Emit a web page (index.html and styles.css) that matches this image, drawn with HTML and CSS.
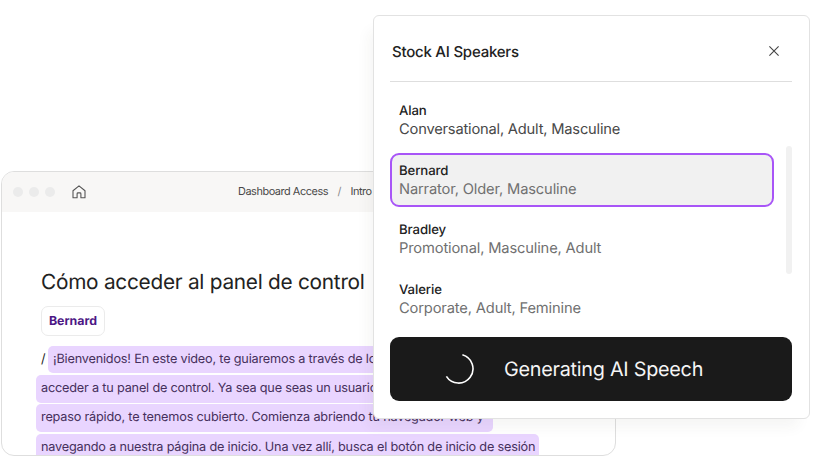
FILE: index.html
```html
<!DOCTYPE html>
<html lang="en">
<head>
  <meta charset="UTF-8">
  <meta name="viewport" content="width=device-width, initial-scale=1.0">
  <title>Stock AI Speakers</title>
  <link rel="stylesheet" href="styles.css">
</head>
<body>

  <!-- Script editor window -->
  <div class="editor">
    <div class="editor-bar">
      <span class="dot"></span>
      <span class="dot"></span>
      <span class="dot"></span>
      <svg class="home-icon" width="14" height="14" viewBox="0 0 14 14" fill="none" stroke="#555" stroke-width="1.1" stroke-linejoin="round">
        <path d="M1 5.8 L7 0.9 L13 5.8 V12.7 H8.9 V8.8 Q8.9 7.9 8 7.9 H6 Q5.1 7.9 5.1 8.8 V12.7 H1 Z" />
      </svg>
      <div class="breadcrumb">
        <span>Dashboard Access</span>
        <span class="separator">/</span>
        <span>Intro</span>
      </div>
    </div>

    <div class="editor-body">
      <h1>Cómo acceder al panel de control</h1>
      <div class="speaker-tag">Bernard</div>
      <div class="script" lang="es">
        <div class="line"><span class="slash">/</span><span class="mark">¡Bienvenidos! En este video, te guiaremos a través de los pasos para</span></div>
        <div class="line"><span class="mark">acceder a tu panel de control. Ya sea que seas un usuario nuevo o</span></div>
        <div class="line"><span class="mark wide">repaso rápido, te tenemos cubierto. Comienza abriendo tu navegador web y</span></div>
        <div class="line"><span class="mark">navegando a nuestra página de inicio. Una vez allí, busca el botón de inicio de sesión</span></div>
      </div>
    </div>
  </div>

  <!-- Speaker picker -->
  <div class="modal">
    <div class="modal-header">
      <h2>Stock AI Speakers</h2>
      <svg class="close-icon" width="10" height="10" viewBox="0 0 10 10" fill="none" stroke="#444" stroke-width="1.1">
        <path d="M0.4 0.4 L9.6 9.6 M9.6 0.4 L0.4 9.6" />
      </svg>
    </div>

    <div class="speakers">
      <div class="speaker-list">
        <div class="speaker alan">
          <div class="name">Alan</div>
          <div class="traits">Conversational, Adult, Masculine</div>
        </div>
        <div class="speaker selected">
          <div class="name">Bernard</div>
          <div class="traits">Narrator, Older, Masculine</div>
        </div>
        <div class="speaker">
          <div class="name">Bradley</div>
          <div class="traits">Promotional, Masculine, Adult</div>
        </div>
        <div class="speaker">
          <div class="name">Valerie</div>
          <div class="traits">Corporate, Adult, Feminine</div>
        </div>
      </div>
      <div class="scrollbar"></div>
    </div>

    <div class="generate">
      <svg class="spinner" width="32" height="32" viewBox="0 0 32 32" fill="none" stroke="#fff" stroke-width="1.6">
        <path d="M19.4 1.8 A14.4 14.4 0 1 1 3.4 23.4" />
      </svg>
      <span>Generating AI Speech</span>
    </div>
  </div>

</body>
</html>
```

FILE: styles.css
```css
* {
  box-sizing: border-box;
}
body {
  position: relative;
  width: 825px;
  height: 456px;
  margin: 0;
  padding: 171px 0 0 1px;
  overflow: hidden;
  background-color: #fff;
  font-family: Inter, "Liberation Sans", sans-serif;
  text-rendering: geometricPrecision;
  color: #222;
}
h1, h2 {
  margin: 0;
}

/* Editor window */
.editor {
  width: 615px;
  height: 285px;
  border: 1px solid #dedede;
  border-radius: 13px;
  overflow: hidden;
}
.editor-bar {
  display: flex;
  align-items: center;
  height: 40px;
  padding-left: 10.5px;
  background-color: #f8f7f6;
}
.dot {
  width: 10px;
  height: 10px;
  margin-right: 6px;
  border-radius: 50%;
  background-color: #ebebeb;
}
.home-icon {
  margin-left: 11px;
}
.breadcrumb {
  display: flex;
  gap: 9.5px;
  margin-left: 152.5px;
  padding-bottom: 2px;
  font-size: 10.9px;
  line-height: 14px;
  letter-spacing: -0.44px;
  color: #484848;
}
.separator {
  color: #888;
}
.editor-body {
  padding: 57px 0 0 34px;
}
.editor-body h1 {
  margin-left: 5px;
  font-size: 20.8px;
  font-weight: 400;
  line-height: 28px;
  letter-spacing: -0.26px;
  white-space: nowrap;
}
.speaker-tag {
  width: 64px;
  height: 30px;
  margin: 9px 0 10px 5px;
  border: 1px solid #ebebeb;
  border-radius: 7px;
  font-size: 12.4px;
  font-weight: 700;
  line-height: 28px;
  text-align: center;
  color: #4c1785;
}
.line {
  display: flex;
  height: 29.2px;
  font-size: 12.7px;
  line-height: 28px;
  letter-spacing: -0.19px;
  white-space: nowrap;
  color: #46305c;
}
.mark {
  height: 27.4px;
  padding: 0 4px 0 5px;
  border-radius: 5px;
  background-color: #e9d5ff;
}
.wide {
  padding-right: 9px;
}
.slash {
  width: 12px;
  padding-left: 5px;
  color: #222;
}

/* Speaker picker */
.modal {
  position: absolute;
  top: 15px;
  left: 373px;
  width: 437px;
  height: 404px;
  padding: 0 17px 0 16px;
  border: 1px solid #e2e2e2;
  border-radius: 6px;
  background-color: #fff;
  box-shadow: -8px 12px 14px -4px rgba(60, 50, 40, 0.05);
}
.modal-header {
  display: flex;
  justify-content: space-between;
  align-items: center;
  height: 66px;
  padding: 5px 13px 0 2px;
  border-bottom: 1px solid #dedede;
}
.modal-header h2 {
  padding-top: 1px;
  font-size: 15px;
  font-weight: 500;
  letter-spacing: -0.23px;
}
.speakers {
  display: flex;
  justify-content: space-between;
  height: 240px;
  padding-top: 11px;
}
.speaker-list {
  width: 384px;
}
.speaker {
  height: 54px;
  margin-bottom: 5.6px;
  padding: 7px;
  border: 2px solid transparent;
  border-radius: 9px;
}
.selected {
  border-color: #a855f7;
  background-color: #f1f1f1;
}
.name {
  font-size: 13.2px;
  font-weight: 500;
  line-height: 18px;
  letter-spacing: -0.1px;
}
.traits {
  font-size: 14.7px;
  line-height: 18px;
  letter-spacing: -0.15px;
  color: #707070;
}
.alan .traits {
  letter-spacing: -0.2px;
  color: #484848;
}
.scrollbar {
  width: 6px;
  height: 128px;
  margin-top: 53px;
  border-radius: 3px;
  background-color: #f1f1f1;
}
.generate {
  display: flex;
  align-items: center;
  height: 64px;
  margin-top: 15px;
  padding-left: 53px;
  border-radius: 9px;
  background-color: #1a1a1a;
  font-size: 19.8px;
  letter-spacing: -0.25px;
  color: #f5f5f5;
}
.spinner {
  margin-right: 29px;
}
```
